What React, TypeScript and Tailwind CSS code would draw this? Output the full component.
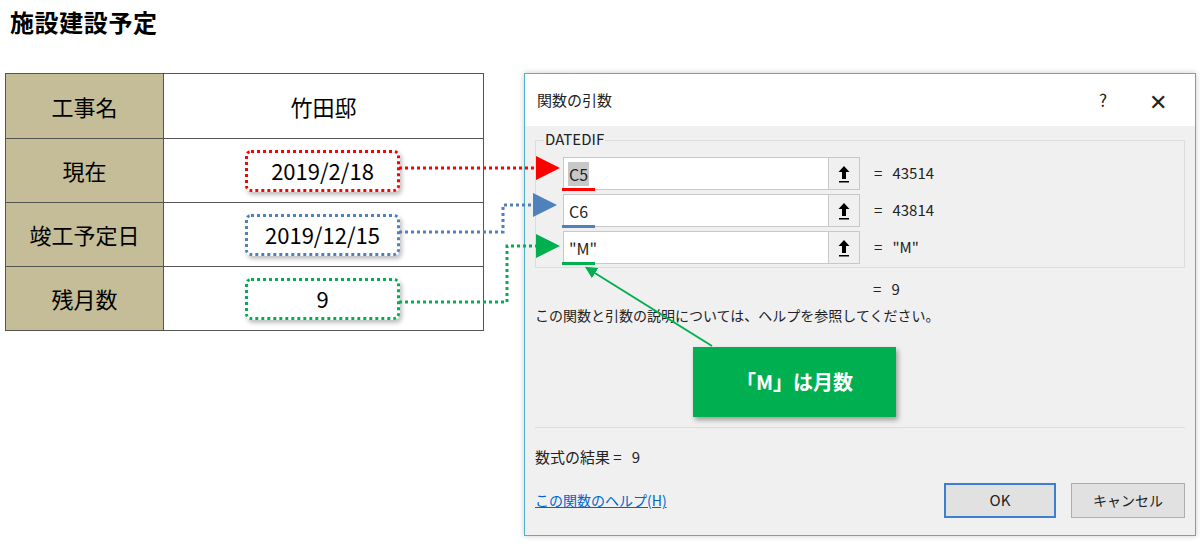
import React from "react";

const font = { fontFamily: '"Noto Sans CJK JP", "Noto Sans", sans-serif' };

const rows = [
  { label: "工事名", value: "竹田邸", box: "" },
  { label: "現在", value: "2019/2/18", box: "border-[#ff0000]" },
  { label: "竣工予定日", value: "2019/12/15", box: "border-[#4f81bd]" },
  { label: "残月数", value: "9", box: "border-[#00b050]" },
];

const args = [
  { v: "C5", r: "43514", u: "bg-[#ff0000]", sel: true },
  { v: "C6", r: "43814", u: "bg-[#4f81bd]", sel: false },
  { v: '"M"', r: '"M"', u: "bg-[#00b050]", sel: false },
];

function UpArrow() {
  return (
    <svg width="14" height="20" viewBox="0 0 14 20">
      <path d="M7 2 L1.5 8 H5 V15 H9 V8 H12.5 Z" fill="#000" />
      <rect x="2" y="17" width="10" height="1.5" fill="#000" />
    </svg>
  );
}

export default function App() {
  return (
    <div className="relative w-[1200px] h-[547px] bg-white overflow-hidden" style={font}>
      <h1 className="absolute left-[10px] top-[4px] text-[24px] font-bold text-black tracking-wide">施設建設予定</h1>

      {/* Table */}
      <div className="absolute left-[5px] top-[73px] w-[479px] border border-[#555] grid grid-cols-[158px_1fr]">
        {rows.map((r, i) => (
          <React.Fragment key={r.label}>
            <div className={`h-[64px] bg-[#c4bd97] flex items-center justify-center text-[22px] text-black border-r border-[#555] ${i > 0 ? "border-t" : ""}`}>
              {r.label}
            </div>
            <div className={`h-[64px] flex items-center justify-center text-[22px] text-black border-[#555] ${i > 0 ? "border-t" : ""}`}>
              {r.box ? (
                <div className={`w-[155px] h-[42px] ml-[-2px] rounded-[6px] border-[3px] border-dotted ${r.box} flex items-center justify-center shadow-[2px_3px_4px_rgba(0,0,0,0.25)]`}>
                  {r.value}
                </div>
              ) : (
                r.value
              )}
            </div>
          </React.Fragment>
        ))}
      </div>

      {/* Dialog */}
      <div className="absolute left-[524px] top-[73px] w-[672px] h-[463px] border border-[#4fb3c8] bg-[#f0f0f0] flex flex-col shadow-[0_0_6px_rgba(0,0,0,0.2)]">
        <div className="h-[52px] bg-white flex items-center px-[12px] text-[15px] text-[#222]">
          <span className="flex-1">関数の引数</span>
          <span className="w-[60px] text-center text-[17px]">?</span>
          <span className="w-[50px] text-center text-[22px] font-light">✕</span>
        </div>
        <div className="relative mx-[10px] mt-[14px] h-[128px] border border-[#dcdcdc] pt-[16px] pl-[27px] flex flex-col gap-[4px]">
          <span className="absolute left-[8px] top-[-10px] bg-[#f0f0f0] px-[1px] text-[15px] text-[#222] leading-none">DATEDIF</span>
          {args.map((a) => (
            <div key={a.v} className="flex items-center h-[33px]">
              <div className="w-[297px] h-[33px] bg-white border border-[#c8c8c8] flex">
                <div className="relative flex-1 flex items-center pl-[4px] text-[16px] text-[#222]">
                  <span className={a.sel ? "bg-[#c8c8c8] px-[1px]" : "px-[1px]"}>{a.v}</span>
                  <span className={`absolute left-[-2px] bottom-[-2px] w-[33px] h-[3px] ${a.u}`} />
                </div>
                <div className="w-[31px] border-l border-[#c8c8c8] bg-[#f0f0f0] flex items-center justify-center">
                  <UpArrow />
                </div>
              </div>
              <span className="ml-[14px] text-[15px] text-[#222]">=&nbsp;&nbsp;&nbsp;{a.r}</span>
            </div>
          ))}
        </div>
        <div className="mt-[10px] ml-[348px] text-[15px] text-[#222]">=&nbsp;&nbsp;&nbsp;9</div>
        <div className="mt-[4px] ml-[10px] text-[14px] text-[#222]">この関数と引数の説明については、ヘルプを参照してください。</div>
        <div className="ml-[168px] mt-[21px] w-[203px] h-[70px] bg-[#00b050] flex items-center justify-center text-white text-[20px] font-bold shadow-[2px_3px_5px_rgba(0,0,0,0.35)]">
          「M」は月数
        </div>
        <div className="mx-[10px] mt-[10px] border-t border-[#dcdcdc]" />
        <div className="mt-[18px] ml-[10px] text-[15px] text-[#222]">数式の結果 =&nbsp;&nbsp;&nbsp;9</div>
        <div className="mt-[15px] mx-[10px] flex items-center">
          <span className="flex-1 text-[14px] text-[#0066cc] underline">この関数のヘルプ(H)</span>
          <div className="w-[112px] h-[35px] border-2 border-[#3c7fd1] bg-[#e1e1e1] flex items-center justify-center text-[15px] text-[#222]">OK</div>
          <div className="ml-[15px] w-[114px] h-[35px] border border-[#adadad] bg-[#e1e1e1] flex items-center justify-center text-[14px] text-[#222]">キャンセル</div>
        </div>
      </div>

      {/* Connector arrows */}
      <svg className="absolute left-0 top-0 pointer-events-none" width="1200" height="547">
        <defs>
          <marker id="mr" markerWidth="8" markerHeight="8" refX="4" refY="4" orient="auto"><path d="M0 0 L8 4 L0 8 Z" fill="#ff0000" /></marker>
          <marker id="mb" markerWidth="8" markerHeight="8" refX="4" refY="4" orient="auto"><path d="M0 0 L8 4 L0 8 Z" fill="#4f81bd" /></marker>
          <marker id="mg" markerWidth="8" markerHeight="8" refX="4" refY="4" orient="auto"><path d="M0 0 L8 4 L0 8 Z" fill="#00b050" /></marker>
          <marker id="ms" markerWidth="6" markerHeight="6" refX="3" refY="3" orient="auto"><path d="M0 0 L6 3 L0 6 Z" fill="#00b050" /></marker>
        </defs>
        <path d="M399 168 H548" stroke="#ff0000" strokeWidth="3" strokeDasharray="3 3" fill="none" markerEnd="url(#mr)" />
        <path d="M399 232 H503 V205 H545" stroke="#4f81bd" strokeWidth="3" strokeDasharray="3 3" fill="none" markerEnd="url(#mb)" />
        <path d="M399 302 H507 V246 H548" stroke="#00b050" strokeWidth="3" strokeDasharray="3 3" fill="none" markerEnd="url(#mg)" />
        <path d="M712 346 L590 270" stroke="#00b050" strokeWidth="2" fill="none" markerEnd="url(#ms)" />
      </svg>
    </div>
  );
}
